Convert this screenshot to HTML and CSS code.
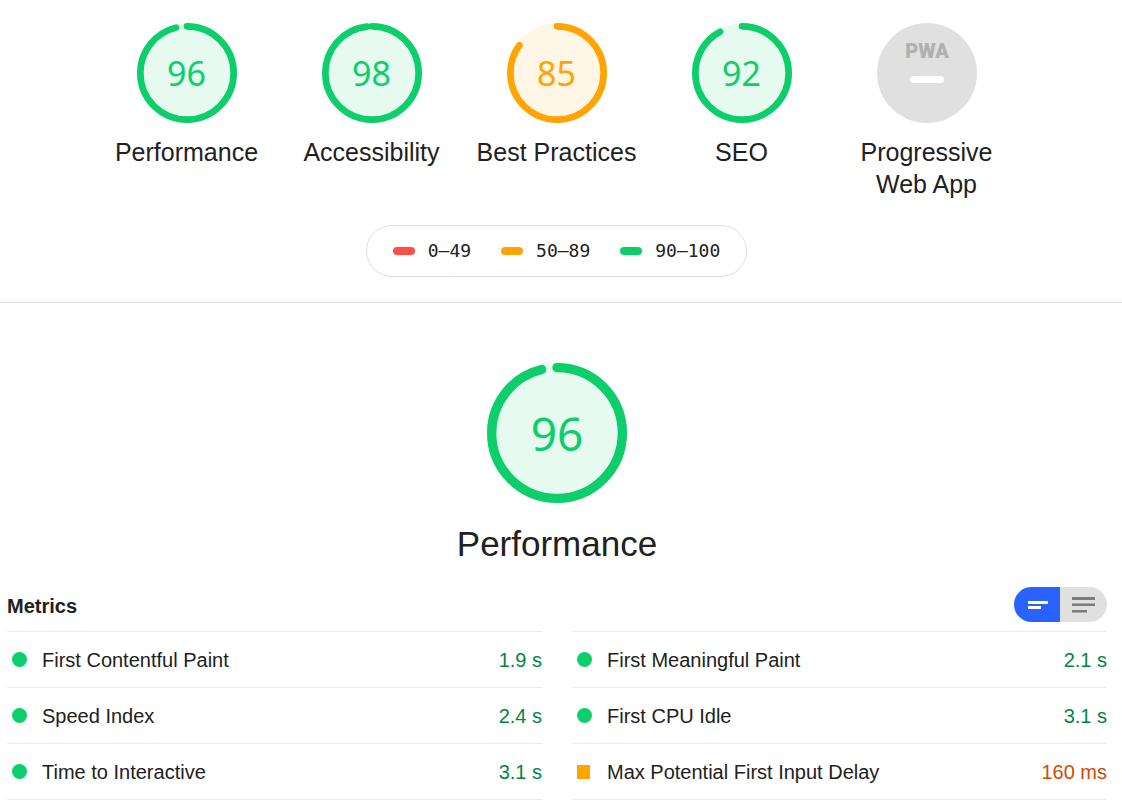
FILE: index.html
```html
<!DOCTYPE html>
<html lang="en">
<head>
<meta charset="utf-8">
<meta name="viewport" content="width=device-width, initial-scale=1">
<title>Performance report</title>
<link rel="stylesheet" href="styles.css">
</head>
<body>
<header class="summary">
  <nav class="gauges" aria-label="Categories">
    <a class="gauge pass" href="#performance">
      <span class="dial">
        <svg viewBox="0 0 120 120" aria-hidden="true"><circle class="base" cx="60" cy="60" r="60"/><circle class="arc" cx="60" cy="60" r="56" stroke-dasharray="338 352"/></svg>
        <span class="score">96</span>
      </span>
      <span class="name">Performance</span>
    </a>
    <a class="gauge pass" href="#accessibility">
      <span class="dial">
        <svg viewBox="0 0 120 120" aria-hidden="true"><circle class="base" cx="60" cy="60" r="60"/><circle class="arc" cx="60" cy="60" r="56" stroke-dasharray="345 352"/></svg>
        <span class="score">98</span>
      </span>
      <span class="name">Accessibility</span>
    </a>
    <a class="gauge average" href="#best-practices">
      <span class="dial">
        <svg viewBox="0 0 120 120" aria-hidden="true"><circle class="base" cx="60" cy="60" r="60"/><circle class="arc" cx="60" cy="60" r="56" stroke-dasharray="299 352"/></svg>
        <span class="score">85</span>
      </span>
      <span class="name">Best Practices</span>
    </a>
    <a class="gauge pass" href="#seo">
      <span class="dial">
        <svg viewBox="0 0 120 120" aria-hidden="true"><circle class="base" cx="60" cy="60" r="60"/><circle class="arc" cx="60" cy="60" r="56" stroke-dasharray="324 352"/></svg>
        <span class="score">92</span>
      </span>
      <span class="name">SEO</span>
    </a>
    <a class="gauge" href="#pwa">
      <span class="dial">
        <svg viewBox="0 0 100 100" aria-hidden="true">
          <circle cx="50" cy="50" r="50" fill="#e0e0e0"/>
          <text class="pwa-logo" x="50" y="35" text-anchor="middle">PWA</text>
          <rect x="33" y="53" width="34" height="7" rx="3.5" fill="#fff"/>
        </svg>
      </span>
      <span class="name">Progressive Web App</span>
    </a>
  </nav>
  <div class="scale">
    <span class="range fail">0–49</span>
    <span class="range average">50–89</span>
    <span class="range pass">90–100</span>
  </div>
</header>

<main class="category" id="performance">
  <div class="gauge large pass">
    <span class="dial">
      <svg viewBox="0 0 120 120" aria-hidden="true"><circle class="base" cx="60" cy="60" r="60"/><circle class="arc" cx="60" cy="60" r="56" stroke-dasharray="338 352"/></svg>
      <span class="score">96</span>
    </span>
    <h1 class="name">Performance</h1>
  </div>

  <div class="metrics-head">
    <h2 class="metrics-title">Metrics</h2>
    <div class="toggle" role="radiogroup" aria-label="Metric view">
      <label class="option">
        <input class="choice" type="radio" name="view" aria-label="Compact view" checked>
        <svg class="icon" viewBox="0 0 24 24" aria-hidden="true"><path d="M3 8h20v3H3zM3 13h13v3H3z"/></svg>
      </label>
      <label class="option">
        <input class="choice" type="radio" name="view" aria-label="Detailed view">
        <svg class="icon" viewBox="0 0 24 24" aria-hidden="true"><path d="M0 4h23v3H0zM0 10.500h23v2.500H0zM0 17h15v2.500H0z"/></svg>
      </label>
    </div>
  </div>

  <div class="metrics">
    <div class="column">
      <div class="metric pass"><span class="mark"></span><span class="label">First Contentful Paint</span><span class="value">1.9 s</span></div>
      <div class="metric pass"><span class="mark"></span><span class="label">Speed Index</span><span class="value">2.4 s</span></div>
      <div class="metric pass"><span class="mark"></span><span class="label">Time to Interactive</span><span class="value">3.1 s</span></div>
    </div>
    <div class="column">
      <div class="metric pass"><span class="mark"></span><span class="label">First Meaningful Paint</span><span class="value">2.1 s</span></div>
      <div class="metric pass"><span class="mark"></span><span class="label">First CPU Idle</span><span class="value">3.1 s</span></div>
      <div class="metric average"><span class="mark"></span><span class="label">Max Potential First Input Delay</span><span class="value">160 ms</span></div>
    </div>
  </div>
</main>
</body>
</html>
```
FILE: styles.css
```css
* { box-sizing: border-box; }

body {
  margin: 0;
  background: #fff;
  color: #212121;
  font: 20px/24px "Liberation Sans", Arial, sans-serif;
}

.pass { --tone: #0cce6b; --text: #018642; }
.average { --tone: #ffa400; --text: #d04900; }
.fail { --tone: #ff4e42; --text: #eb0f00; }

.summary {
  display: flex;
  flex-direction: column;
  align-items: center;
  gap: 25px;
  padding: 23px 9px 25px 0;
  border-bottom: 1px solid #e0e0e0;
}

.gauges {
  display: flex;
  flex-wrap: wrap;
  justify-content: center;
}

.gauge {
  display: flex;
  flex-direction: column;
  align-items: center;
  gap: 13px;
  width: 185px;
  color: inherit;
  text-decoration: none;
}

.dial {
  display: grid;
  place-items: center;
  width: 100px;
  height: 100px;
}

.dial > * { grid-area: 1 / 1; }
.dial svg { display: block; width: 100%; height: 100%; }
.base { fill: var(--tone); opacity: 0.1; }

.arc {
  fill: none;
  stroke: var(--tone);
  stroke-width: 8;
  stroke-linecap: round;
  transform: rotate(-90deg);
  transform-origin: center;
}

.score {
  color: var(--tone);
  font: 34px/40px "Noto Sans", "Open Sans", sans-serif;
}

.pwa-logo {
  fill: #b0b0b0;
  font: 900 20px Roboto, sans-serif;
}

.name {
  max-width: 170px;
  margin: 0;
  font-size: 25px;
  font-weight: 400;
  line-height: 32px;
  text-align: center;
}

.scale {
  display: flex;
  align-items: center;
  gap: 30px;
  height: 52px;
  padding: 0 26px;
  border: 1px solid #e0e0e0;
  border-radius: 26px;
  font: 18px/24px "DejaVu Sans Mono", monospace;
}

.range {
  display: flex;
  align-items: center;
  gap: 13px;
}

.range::before {
  content: "";
  width: 22px;
  height: 8px;
  border-radius: 4px;
  background: var(--tone);
}

.category { padding: 60px 15px 0 7px; }

.large {
  width: auto;
  gap: 21px;
}

.large .dial { width: 140px; height: 140px; }
.large .score { font-size: 46px; line-height: 56px; }
.large .name { max-width: none; font-size: 35px; line-height: 40px; }

.metrics-head {
  display: flex;
  justify-content: space-between;
  align-items: center;
  margin: 23px 0 9px;
}

.metrics-title {
  margin: 0;
  padding-top: 2px;
  font-size: 20px;
  line-height: 24px;
}

.toggle {
  display: flex;
  overflow: hidden;
  border-radius: 18px;
}

.option {
  display: grid;
  place-items: center;
  width: 47px;
  height: 35px;
  background: #e0e0e0;
  cursor: pointer;
}

.option:first-child { width: 46px; }

.choice {
  grid-area: 1 / 1;
  width: 100%;
  height: 100%;
  margin: 0;
  appearance: none;
}

.icon {
  grid-area: 1 / 1;
  width: 24px;
  height: 24px;
  fill: #7c7c7c;
  pointer-events: none;
}

.option:has(.choice:checked) { background: #2962ff; }
.choice:checked + .icon { fill: #fff; }

.metrics {
  display: grid;
  grid-template-columns: 1fr 1fr;
  gap: 30px;
}

.column { border-bottom: 1px solid #ebebeb; }

.metric {
  display: flex;
  align-items: center;
  gap: 15px;
  height: 56px;
  padding-left: 5px;
  border-top: 1px solid #ebebeb;
}

.mark {
  width: 15px;
  height: 15px;
  border-radius: 50%;
  background: var(--tone);
}

.average .mark {
  width: 13px;
  height: 14px;
  margin-right: 2px;
  border-radius: 0;
}

.label { flex: 1; }
.value { color: var(--text); }
```
